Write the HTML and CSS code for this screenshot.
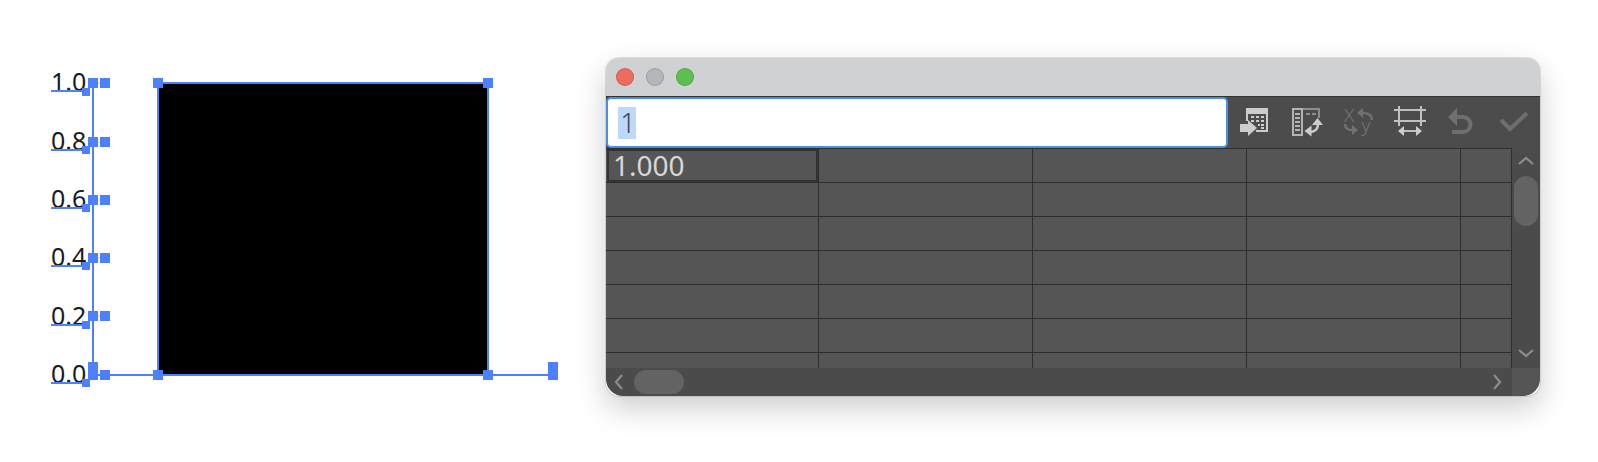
FILE: index.html
```html
<!DOCTYPE html>
<html lang="en">
<head>
  <meta charset="UTF-8" />
  <title>Chart data</title>
  <link rel="stylesheet" href="styles.css">
</head>
<body>

  <div class="page">

    <!-- selected chart on the artboard -->
    <svg class="chart" width="606" height="462" viewBox="0 0 606 462">
      <rect class="plot" x="158" y="83" width="330" height="292" />

      <text class="tick-label" x="51" y="91">1.0</text>
      <text class="tick-label" x="51" y="150">0.8</text>
      <text class="tick-label" x="51" y="208">0.6</text>
      <text class="tick-label" x="51" y="266">0.4</text>
      <text class="tick-label" x="51" y="325">0.2</text>
      <text class="tick-label" x="51" y="383">0.0</text>

      <g class="guide">
        <line x1="93" y1="83" x2="93" y2="375" />
        <line x1="93" y1="375" x2="550" y2="375" />
        <line x1="51" y1="91" x2="88" y2="91" />
        <line x1="51" y1="150" x2="88" y2="150" />
        <line x1="51" y1="208" x2="88" y2="208" />
        <line x1="51" y1="266" x2="88" y2="266" />
        <line x1="51" y1="325" x2="88" y2="325" />
        <line x1="51" y1="383" x2="88" y2="383" />
      </g>

      <g class="connector">
        <line x1="98" y1="83" x2="100" y2="83" />
        <line x1="98" y1="142" x2="100" y2="142" />
        <line x1="98" y1="200" x2="100" y2="200" />
        <line x1="98" y1="258" x2="100" y2="258" />
        <line x1="98" y1="316" x2="100" y2="316" />
      </g>

      <g class="handle">
        <rect x="88" y="78" width="10" height="10" /><rect x="100" y="78" width="10" height="10" /><rect x="82" y="88" width="8" height="8" />
        <rect x="88" y="137" width="10" height="10" /><rect x="100" y="137" width="10" height="10" /><rect x="82" y="146" width="8" height="8" />
        <rect x="88" y="195" width="10" height="10" /><rect x="100" y="195" width="10" height="10" /><rect x="82" y="204" width="8" height="8" />
        <rect x="88" y="253" width="10" height="10" /><rect x="100" y="253" width="10" height="10" /><rect x="82" y="262" width="8" height="8" />
        <rect x="88" y="311" width="10" height="10" /><rect x="100" y="311" width="10" height="10" /><rect x="82" y="321" width="8" height="8" />
        <rect x="88" y="362" width="10" height="18" /><rect x="100" y="370" width="10" height="10" /><rect x="82" y="379" width="8" height="8" />
        <rect x="153" y="78" width="10" height="10" /><rect x="483" y="78" width="10" height="10" />
        <rect x="153" y="370" width="10" height="10" /><rect x="483" y="370" width="10" height="10" />
        <rect x="548" y="362" width="10" height="18" />
      </g>
    </svg>

    <!-- graph data window -->
    <div class="window">
      <div class="titlebar">
        <span class="light light-close"></span>
        <span class="light light-min"></span>
        <span class="light light-max"></span>
      </div>

      <div class="toolbar">
        <div class="entry"><span class="entry-text">1</span></div>
        <div class="tools">
          <svg class="tool" width="32" height="32" viewBox="0 0 32 32">
            <path class="fill-on" d="M8 2h22v24H18v-2h10V8H10v7H8z" />
            <path class="fill-on" d="M13 10h3v2h-3zM18 10h3v2h-3zM23 10h3v2h-3zM13 14h3v2h-3zM18 14h3v2h-3zM23 14h3v2h-3zM20 18h2v2h-2zM23 18h3v2h-3zM23 21h3v2h-3z" />
            <path class="fill-on" d="M2 18h8v-4l9 8-9 8v-4H2z" />
          </svg>
          <svg class="tool" width="32" height="32" viewBox="0 0 32 32">
            <path class="fill-soft" d="M2 2h11v28H2zM4 4v24h7V4z" />
            <path class="fill-soft" d="M5 7h5v2H5zM5 11h5v2H5zM5 15h5v2H5zM5 19h5v2H5zM5 23h5v2H5z" />
            <path class="fill-dim" d="M13 2h17v10h-2V4H13zM16 7h4v2h-4zM22 7h4v2h-4z" />
            <path class="line-on" d="M20 26c5 0 8-3 8-8" />
            <path class="fill-on" d="M27.5 12l5.5 7H22zM14.5 25l7-5.5v11z" />
          </svg>
          <svg class="tool" width="32" height="32" viewBox="0 0 32 32">
            <text class="tool-text" x="2" y="16">X</text>
            <text class="tool-text" x="19.5" y="26">y</text>
            <path class="line-off" d="M20 7c6 0 10 2 10 7" />
            <path class="fill-off" d="M15 7l6-5v10z" />
            <path class="line-off" d="M3 18c0 4 2 6 7 6" />
            <path class="fill-off" d="M16 24l-6-5v10z" />
          </svg>
          <svg class="tool" width="32" height="32" viewBox="0 0 32 32">
            <path class="line-thin" d="M0 4h32M0 15h32M5 0v20M27 0v20M8 25h16" />
            <path class="fill-on" d="M4 25l6-5v10zM28 25l-6-5v10z" />
          </svg>
          <svg class="tool" width="32" height="32" viewBox="0 0 32 32">
            <path class="line-heavy" d="M8 11h9a7.5 7.5 0 0 1 0 15H6" />
            <path class="fill-off" d="M11 2v18L2 11z" />
          </svg>
          <svg class="tool" width="32" height="32" viewBox="0 0 32 32">
            <path class="line-heavy" d="M3 14l9 9L29 7" />
          </svg>
        </div>
      </div>

      <div class="sheet">
        <div class="cells">
          <div class="cell cell-selected">1.000</div><div class="cell"></div><div class="cell"></div><div class="cell"></div><div class="cell"></div>
          <div class="cell"></div><div class="cell"></div><div class="cell"></div><div class="cell"></div><div class="cell"></div>
          <div class="cell"></div><div class="cell"></div><div class="cell"></div><div class="cell"></div><div class="cell"></div>
          <div class="cell"></div><div class="cell"></div><div class="cell"></div><div class="cell"></div><div class="cell"></div>
          <div class="cell"></div><div class="cell"></div><div class="cell"></div><div class="cell"></div><div class="cell"></div>
          <div class="cell"></div><div class="cell"></div><div class="cell"></div><div class="cell"></div><div class="cell"></div>
          <div class="cell cell-last"></div><div class="cell cell-last"></div><div class="cell cell-last"></div><div class="cell cell-last"></div><div class="cell cell-last"></div>
        </div>

        <div class="vscroll">
          <svg class="arrow" width="16" height="10" viewBox="0 0 16 10"><path d="M1 8l7-6 7 6" /></svg>
          <div class="vthumb"></div>
          <svg class="arrow arrow-end" width="16" height="10" viewBox="0 0 16 10"><path d="M1 2l7 6 7-6" /></svg>
        </div>

        <div class="hscroll">
          <svg class="arrow" width="10" height="16" viewBox="0 0 10 16"><path d="M8 1L2 8l6 7" /></svg>
          <div class="hthumb"></div>
          <svg class="arrow arrow-end" width="10" height="16" viewBox="0 0 10 16"><path d="M2 1l6 7-6 7" /></svg>
        </div>

        <div class="corner"></div>
      </div>
    </div>

  </div>

</body>
</html>
```

FILE: styles.css
```css
html, body {
  margin: 0;
  height: 100%;
  background-color: #ffffff;
  overflow: hidden;
}
.page {
  display: flex;
  align-items: flex-start;
  font-family: "Noto Sans", "Open Sans", sans-serif;
}

/* chart */
.chart {
  display: block;
  flex: none;
}
.plot {
  fill: #000000;
  stroke: #4d80ff;
  stroke-width: 2;
}
.tick-label {
  font-family: "Noto Sans", sans-serif;
  font-size: 25px;
  fill: #1a1a1a;
}
.guide line {
  stroke: #4d80ff;
  stroke-width: 2;
}
.connector line {
  stroke: #c4c4c4;
  stroke-width: 1;
}
.handle rect {
  fill: #4d80ff;
}

/* window */
.window {
  flex: none;
  width: 934px;
  height: 338px;
  margin-top: 58px;
  border-radius: 13px;
  overflow: hidden;
  background-color: #f4f4f4;
  box-shadow: 0 0 0 1px rgba(0,0,0,0.1), 0 12px 30px rgba(0,0,0,0.2);
}
.titlebar {
  display: flex;
  align-items: center;
  gap: 12px;
  height: 39px;
  padding-left: 10px;
  box-sizing: border-box;
  background-color: #d0d1d3;
  border-bottom: 1px solid #333333;
}
.light {
  width: 18px;
  height: 18px;
  box-sizing: border-box;
  border-radius: 50%;
  border: 1px solid rgba(0,0,0,0.14);
}
.light-close { background-color: #ee6b60; }
.light-min { background-color: #b5b6b8; }
.light-max { background-color: #5dc04e; }

.toolbar {
  display: flex;
  align-items: flex-start;
  height: 51px;
  background-color: #4c4c4c;
}
.entry {
  display: flex;
  align-items: center;
  width: 622px;
  height: 51px;
  box-sizing: border-box;
  padding-left: 10px;
  background-color: #ffffff;
  border: 2px solid #4a90e2;
  border-radius: 5px;
}
.entry-text {
  width: 18px;
  height: 32px;
  line-height: 32px;
  text-align: center;
  text-indent: 2px;
  font-size: 27px;
  font-weight: 300;
  color: #444444;
  background-color: #bcd8fb;
}
.tools {
  display: flex;
  gap: 20px;
  margin: 9px 0 0 10px;
}
.tool {
  display: block;
  overflow: visible;
}
.fill-on { fill: #cccccc; }
.fill-soft { fill: #b4b4b4; }
.fill-dim { fill: #8e8e8e; }
.fill-off { fill: #707070; }
.line-on {
  fill: none;
  stroke: #cccccc;
  stroke-width: 2.5;
}
.line-thin {
  fill: none;
  stroke: #c0c0c0;
  stroke-width: 2;
}
.line-off {
  fill: none;
  stroke: #707070;
  stroke-width: 2.5;
}
.line-heavy {
  fill: none;
  stroke: #6e6e6e;
  stroke-width: 4;
}
.tool-text {
  font-family: "Noto Sans", sans-serif;
  font-size: 19px;
  font-weight: 300;
  fill: #747474;
}

/* sheet and scrollbars */
.sheet {
  display: grid;
  grid-template-columns: 906px 28px;
  grid-template-rows: 220px 28px;
}
.cells {
  display: grid;
  grid-template-columns: 213px 214px 214px 214px 51px;
  grid-template-rows: repeat(6, 34px) 15px;
  background-color: #555555;
  border-top: 1px solid #2e2e2e;
}
.cell {
  box-sizing: border-box;
  padding-left: 7px;
  border-right: 1px solid #2e2e2e;
  border-bottom: 1px solid #2e2e2e;
  font-size: 28px;
  line-height: 32px;
  color: #d8d8d8;
}
.cell-last {
  border-bottom: 0;
}
.cell-selected {
  box-shadow: inset 1px 0 0 #555555, inset 3px 0 0 #333333, inset 0 2px 0 #333333, inset 0 -2px 0 #333333, inset -2px 0 0 #333333;
}
.vscroll {
  display: flex;
  flex-direction: column;
  align-items: center;
  padding: 8px 0 10px;
  box-sizing: border-box;
  background-color: #4b4b4b;
}
.vthumb {
  width: 24px;
  height: 50px;
  margin-top: 10px;
  border-radius: 12px;
  background-color: #636363;
}
.hscroll {
  display: flex;
  align-items: center;
  padding: 0 10px 0 8px;
  border-bottom-left-radius: 17px;
  background-color: #4b4b4b;
}
.hthumb {
  width: 50px;
  height: 24px;
  margin-left: 10px;
  border-radius: 12px;
  background-color: #636363;
}
.arrow {
  display: block;
  flex: none;
}
.arrow path {
  fill: none;
  stroke: #8c8c8c;
  stroke-width: 2.2;
}
.vscroll .arrow-end {
  margin-top: auto;
}
.hscroll .arrow-end {
  margin-left: auto;
}
.corner {
  border-bottom-right-radius: 17px;
  background-color: #555555;
}
```
